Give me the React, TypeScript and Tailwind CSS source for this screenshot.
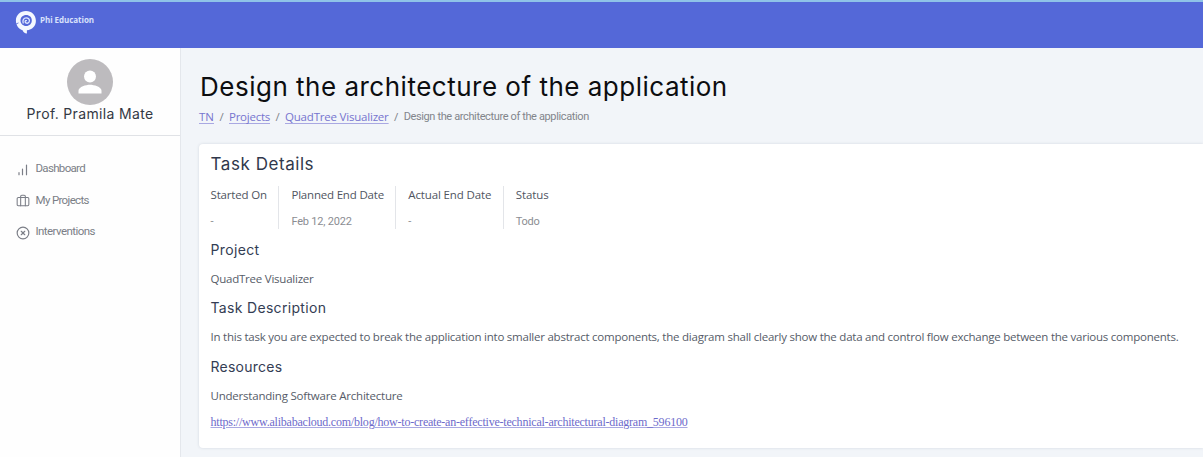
import { Briefcase, CircleX } from 'lucide-react';
import type { ReactNode } from 'react';

function Logo() {
  return (
    <svg viewBox="0 0 22 24" className="h-6 w-[22px]" fill="none">
      <path
        fillRule="evenodd"
        clipRule="evenodd"
        d="M11 1C5.200 1 .9 5.200.9 10.500c0 3 1 5.400 2.600 7.200 1.500 1.700 3.300 2.300 4.300 2.700.5 1.700 1.700 2.900 4.100 3.100v-3.300c5.300-.3 9-4.300 9-9.500C20.900 5.200 16.700 1 11 1Zm.2 4.100c3.300 0 5.600 2.400 5.600 5.400s-2.300 5.500-5.600 5.500-5.700-2.400-5.700-5.500 2.400-5.400 5.700-5.400Z"
        fill="#f4f8ff"
      />
      <path d="M8.200 13c-.9-2.900.5-5.100 3-5.100 2.100 0 3.400 1.400 3.200 3.100-.2 1.600-1.500 2.400-2.800 2.200-1.200-.2-1.700-1.200-1.400-2 .2-.5.700-.8 1.200-.6" stroke="#dfe8ff" strokeWidth="1.300" strokeLinecap="round" />
      <path d="m.8 14.200 2.700-1.300" stroke="#5468d8" strokeWidth=".8" />
    </svg>
  );
}

function Bars() {
  return (
    <svg viewBox="0 0 14 14" className="size-3.5" stroke="currentColor" strokeWidth="1.200" strokeLinecap="round">
      <path d="M3 11.700V9.700M6.500 11.700V6.200M10.500 11.700V2" />
    </svg>
  );
}

function NavItem({ icon, children }: { icon: ReactNode; children: ReactNode }) {
  return (
    <a className="flex h-[31.5px] items-center gap-1.5 text-[#7b7e87]">
      <span className="mt-0.5">{icon}</span>
      {children}
    </a>
  );
}

function Heading({ children }: { children: ReactNode }) {
  return <h3 className="flex h-[29px] items-center font-['Inter'] text-[14px] text-[#343d54]">{children}</h3>;
}

function Body({ children }: { children: ReactNode }) {
  return <p className="flex h-[29.3px] items-center whitespace-nowrap text-[11.5px] text-[#565c68]">{children}</p>;
}

function Field({ label, value }: { label: ReactNode; value: ReactNode }) {
  return (
    <div className="flex flex-col border-l border-[#e3e5e9] pr-[11.4px] pl-3 whitespace-nowrap first:border-l-0 first:pl-0">
      <div className="h-[18px] text-[11.5px] leading-[18px] text-[#50555f]">{label}</div>
      <div className="mt-2.5 h-4 font-['Roboto'] text-[11px] leading-4 tracking-[-0.2px] text-[#8b8d92]">{value}</div>
    </div>
  );
}

export default function App() {
  return (
    <div className="flex h-[457px] w-[1203px] flex-col overflow-hidden bg-[#f2f5f9] font-['Open_Sans',sans-serif]">
      <header className="flex h-12 shrink-0 items-start border-t-2 border-[#8fc3e8] bg-[#5468d8] pl-[15px]">
        <div className="mt-2">
          <Logo />
        </div>
        <span className="mt-3 ml-[3px] text-[8px] leading-[11px] font-bold tracking-[-0.052px] text-[#d9e1fb]">Phi Education</span>
      </header>
      <div className="flex min-h-0 flex-1">
        <aside className="w-[181px] shrink-0 border-r border-[#e4e7ec] bg-[#fefefe]">
          <div className="flex h-[88px] flex-col items-center border-b border-[#e0e2e6] pt-[11px]">
            <svg viewBox="0 0 46 46" className="size-[46px]">
              <circle cx="23" cy="23" r="23" fill="#bdbbbe" />
              <circle cx="23" cy="17.500" r="6" fill="#fff" />
              <path d="M11.500 34.500v-2.700c0-4 7.700-6 11.500-6s11.500 2 11.500 6v2.700Z" fill="#fff" />
            </svg>
            <div className="font-['Inter'] text-[14px] leading-[18px] tracking-[0.346px] whitespace-nowrap text-[#343944]">Prof. Pramila Mate</div>
          </div>
          <nav className="mt-[17px] flex flex-col pl-[15.5px] font-['Roboto'] text-[11.5px]">
            <NavItem icon={<Bars />}>
              <span className="tracking-[-0.68px]">Dashboard</span>
            </NavItem>
            <NavItem icon={<Briefcase className="size-3.5" strokeWidth={1.8} />}>
              <span className="tracking-[-0.65px]">My Projects</span>
            </NavItem>
            <NavItem icon={<CircleX className="size-3.5" strokeWidth={2} />}>
              <span className="tracking-[-0.57px]">Interventions</span>
            </NavItem>
          </nav>
        </aside>
        <main className="flex min-w-0 flex-1 flex-col pt-[23px] pl-[18px]">
          <h1 className="pl-px font-['Inter'] text-[26px] leading-8 tracking-[0.5px] whitespace-nowrap text-[#0c0d10]">
            Design the architecture of the application
          </h1>
          <div className="mt-[5px] flex h-[18px] items-center gap-[5.4px] text-[11.5px] whitespace-nowrap text-[#82858c]">
            <a className="text-[#7674cf] underline decoration-[#a9a8e2] underline-offset-2">TN</a>
            <span>/</span>
            <a className="tracking-[-0.248px] text-[#7674cf] underline decoration-[#a9a8e2] underline-offset-2">Projects</a>
            <span>/</span>
            <a className="tracking-[-0.2px] text-[#7674cf] underline decoration-[#a9a8e2] underline-offset-2">QuadTree Visualizer</a>
            <span>/</span>
            <span className="font-['Roboto'] text-[11px] tracking-[-0.37px]">Design the architecture of the application</span>
          </div>
          <section className="mt-[17.500px] h-[304px] rounded-l-sm bg-white pt-2 pl-[11.5px] shadow-[0_0_3px_rgba(80,90,110,0.18)]">
            <h2 className="flex h-[27px] items-center font-['Inter'] text-[17px] tracking-[0.56px] text-[#30384b]">Task Details</h2>
            <div className="mt-[7.500px] flex h-[43px]">
              <Field label={<span className="tracking-[-0.157px]">Started On</span>} value="-" />
              <Field label={<span className="tracking-[-0.191px]">Planned End Date</span>} value="Feb 12, 2022" />
              <Field label={<span className="tracking-[-0.131px]">Actual End Date</span>} value="-" />
              <Field label={<span className="tracking-[-0.071px]">Status</span>} value="Todo" />
            </div>
            <div className="mt-[6px]">
              <Heading><span className="tracking-[0.356px]">Project</span></Heading>
              <Body><span className="tracking-[-0.231px]">QuadTree Visualizer</span></Body>
              <Heading><span className="tracking-[0.32px]">Task Description</span></Heading>
              <Body>
                <span className="tracking-[-0.234px]">
                  In this task you are expected to break the application into smaller abstract components, the diagram shall clearly show the data and control flow exchange between the various components.
                </span>
              </Body>
              <Heading><span className="tracking-[0.25px]">Resources</span></Heading>
              <Body><span className="tracking-[-0.209px]">Understanding Software Architecture</span></Body>
            </div>
            <a className="mt-1 block font-['Liberation_Serif',serif] text-[12px] leading-4 tracking-[-0.22px] whitespace-nowrap text-[#6d6acb] underline decoration-[#a9a8e2]">
              https://www.alibabacloud.com/blog/how-to-create-an-effective-technical-architectural-diagram_596100
            </a>
          </section>
        </main>
      </div>
    </div>
  );
}
